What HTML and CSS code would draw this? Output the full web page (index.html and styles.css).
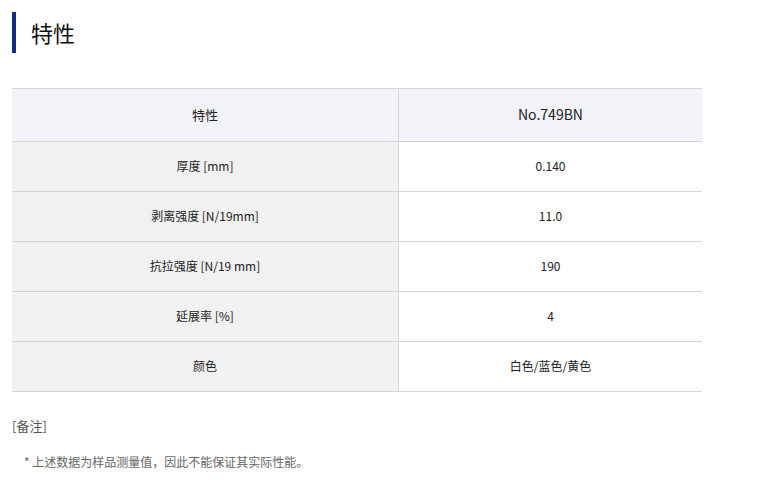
FILE: index.html
```html
<!DOCTYPE html>
<html lang="zh-CN">
<head>
<meta charset="utf-8">
<link rel="stylesheet" href="styles.css">
</head>
<body>
<div class="page">
  <h2 class="title">特性</h2>
  <table class="spec">
    <thead>
      <tr><th class="label">特性</th><th class="val">No.749BN</th></tr>
    </thead>
    <tbody>
      <tr><td class="label">厚度 [mm]</td><td class="val">0.140</td></tr>
      <tr><td class="label">剥离强度 [N/19mm]</td><td class="val">11.0</td></tr>
      <tr><td class="label">抗拉强度 [N/19 mm]</td><td class="val">190</td></tr>
      <tr><td class="label">延展率 [%]</td><td class="val">4</td></tr>
      <tr><td class="label">颜色</td><td class="val">白色/蓝色/黄色</td></tr>
    </tbody>
  </table>
  <p class="remark">[备注]</p>
  <p class="note">* 上述数据为样品测量值，因此不能保证其实际性能。</p>
</div>
</body>
</html>
```
FILE: styles.css
```css
html, body { margin: 0; padding: 0; background: #fff; }
body { font-family: "Noto Sans CJK SC", "Noto Sans", sans-serif; color: #333; }
.page { padding: 12px 12px 0 12px; width: 690px; }
.title {
  margin: 0;
  border-left: 4px solid #102b8a;
  height: 41px;
  line-height: 41px;
  padding-left: 15px;
  font-size: 22px;
  font-weight: normal;
  color: #111;
}
.spec {
  margin-top: 35px;
  width: 690px;
  border-collapse: collapse;
  table-layout: fixed;
}
.spec th, .spec td {
  border-top: 1px solid #d4d4d4;
  border-bottom: 1px solid #d4d4d4;
  text-align: center;
  padding: 0 0 2px 0;
  font-weight: normal;
}
.spec th { height: 50px; background: #f1f3f8; font-size: 13px; color: #222; }
.spec th.val { font-size: 14px; }
.spec td { height: 47px; font-size: 12px; color: #222; }
.spec .label { width: 386px; border-right: 1px solid #d4d4d4; }
.spec td.label { background: #f1f1f1; }
.spec td.val { background: #fff; }
.remark { margin: 24px 0 0 0; font-size: 13px; color: #555; line-height: 20px; }
.note { margin: 17px 0 0 12px; font-size: 12px; color: #666; line-height: 18px; }
```
